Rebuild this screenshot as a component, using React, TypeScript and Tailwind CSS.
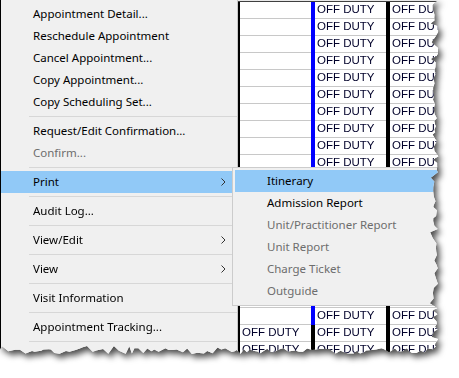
import React from "react";

type Item = { label: string; disabled?: boolean; sub?: boolean; active?: boolean } | "sep";

const mainItems: Item[] = [
  { label: "Appointment Detail..." },
  { label: "Reschedule Appointment" },
  { label: "Cancel Appointment..." },
  { label: "Copy Appointment..." },
  { label: "Copy Scheduling Set..." },
  "sep",
  { label: "Request/Edit Confirmation..." },
  { label: "Confirm...", disabled: true },
  "sep",
  { label: "Print", sub: true, active: true },
  "sep",
  { label: "Audit Log..." },
  "sep",
  { label: "View/Edit", sub: true },
  "sep",
  { label: "View", sub: true },
  "sep",
  { label: "Visit Information" },
  "sep",
  { label: "Appointment Tracking..." },
  "sep",
];

const subItems: { label: string; disabled?: boolean; active?: boolean }[] = [
  { label: "Itinerary", active: true },
  { label: "Admission Report" },
  { label: "Unit/Practitioner Report", disabled: true },
  { label: "Unit Report", disabled: true },
  { label: "Charge Ticket", disabled: true },
  { label: "Outguide", disabled: true },
];

function makeRng(seed: number) {
  let s = seed;
  return () => {
    s = (s * 16807) % 2147483647;
    return (s - 1) / 2147483646;
  };
}

function tornPolygon() {
  const r = makeRng(12345);
  const pts: string[] = ["0px 0px", "439px 0px"];
  let y = 0;
  while (y < 346) {
    y += 2 + r() * 4;
    if (y > 346) y = 346;
    let x = 435.5 + (r() - 0.5) * 6;
    if (r() > 0.85) x -= 3;
    pts.push(`${x.toFixed(1)}px ${y.toFixed(1)}px`);
  }
  let x = 437;
  while (x > 0) {
    x -= 2 + r() * 5;
    if (x < 0) x = 0;
    let yy = 351 + (r() - 0.5) * 6;
    if (r() > 0.85) yy -= 3;
    pts.push(`${x.toFixed(1)}px ${yy.toFixed(1)}px`);
  }
  pts.push("0px 350px");
  return `polygon(${pts.join(", ")})`;
}

const clip = tornPolygon();

function Chevron() {
  return (
    <svg width="5" height="8" viewBox="0 0 5 8" className="shrink-0">
      <path d="M0.5 0.5 L4 4 L0.5 7.5" fill="none" stroke="#333" strokeWidth="1" />
    </svg>
  );
}

function MainMenu() {
  return (
    <div className="w-[238px] shrink-0 h-full bg-[#f0f0f0] border-l border-black border-r border-r-[#c8c8c8] flex flex-col pt-[3px]">
      {mainItems.map((it, i) =>
        it === "sep" ? (
          <div key={i} className="h-[7px] flex items-center pl-[28px]">
            <div className="h-px flex-1 bg-[#d7d7d7]" />
          </div>
        ) : (
          <div
            key={i}
            className={
              "h-[22px] flex items-center pl-[32px] pr-[11px] " +
              (it.active ? "bg-[#91c9f7] " : "") +
              (it.disabled ? "text-[#6d6d6d]" : "text-black")
            }
          >
            <span className="flex-1 whitespace-nowrap">{it.label}</span>
            {it.sub && <Chevron />}
          </div>
        )
      )}
    </div>
  );
}

function Cell({ text, w }: { text?: string; w?: string }) {
  return (
    <div
      className={
        (w ?? "flex-1") +
        " h-full bg-white border-b border-[#c8c8c8] flex items-center pl-[2px] overflow-hidden whitespace-nowrap text-[#00002a] font-['Liberation_Sans',Arial,sans-serif] text-[11.5px] leading-none"
      }
    >
      {text}
    </div>
  );
}

function Grid() {
  const rows = Array.from({ length: 22 }, (_, i) => i);
  return (
    <div className="flex-1 h-full flex flex-col overflow-hidden">
      <div className="h-px bg-[#e8e8e8] shrink-0" />
      <div className="h-px bg-[#404040] shrink-0" />
      {rows.map((i) => {
        const filled = i >= 19;
        const hidden = i >= 10 && i <= 16;
        const t = hidden ? "" : "OFF DUTY";
        return (
          <div key={i} className="h-[17px] shrink-0 flex">
            <div className="w-[2px] bg-black" />
            <Cell w="w-[71px]" text={filled ? t : ""} />
            <div className={"w-[4px] " + (filled ? "bg-black" : "bg-[#0000ff]")} />
            <Cell w="w-[71px]" text={t} />
            <div className="w-[4px] bg-black" />
            <Cell text={t} />
          </div>
        );
      })}
    </div>
  );
}

function SubMenu() {
  return (
    <div className="absolute left-[232px] top-[167px] w-[230px] h-[139px] bg-[#f0f0f0] border border-[#cccccc] pt-[2px] pl-[2px] flex flex-col">
      {subItems.map((it, i) => (
        <div
          key={i}
          className={
            "h-[22px] shrink-0 flex items-center pl-[32px] whitespace-nowrap " +
            (it.active ? "bg-[#91c9f7] " : "") +
            (it.disabled ? "text-[#6d6d6d]" : "text-black")
          }
        >
          {it.label}
        </div>
      ))}
    </div>
  );
}

export default function App() {
  return (
    <div className="w-[459px] h-[378px] bg-white overflow-hidden relative">
      <div className="[filter:drop-shadow(3px_4px_3px_rgba(0,0,0,0.7))]">
        <div
          className="w-[459px] h-[378px] relative bg-white font-['Noto_Sans',sans-serif] text-[11.5px]"
          style={{ clipPath: clip }}
        >
          <div className="flex h-full">
            <MainMenu />
            <Grid />
          </div>
          <SubMenu />
        </div>
      </div>
    </div>
  );
}
